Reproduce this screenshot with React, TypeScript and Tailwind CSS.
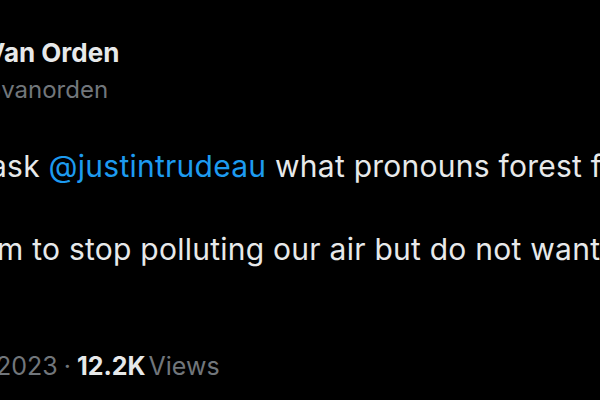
export default function App() {
  return (
    <div className="w-[600px] h-[400px] bg-black overflow-hidden font-['Inter',sans-serif] text-[#e7e9ea]">
      <div className="flex flex-col pt-[38px] whitespace-nowrap">
        {/* author */}
        <div className="-ml-[14px] text-[26px] leading-[30px] font-bold">Van Orden</div>
        <div className="mt-[7px] -ml-[22px] text-[24px] leading-[30px] text-[#71767b]">@vanorden</div>

        {/* tweet body */}
        <p className="mt-[43px] -ml-[10px] text-[30px] leading-[36px] tracking-[0.25px]">
          ask <span className="text-[#1d9bf0]">@justintrudeau</span> what pronouns forest fires use
        </p>
        <p className="mt-[47px] -ml-[3px] text-[30px] leading-[36px] tracking-[0.25px]">
          m to stop polluting our air but do not want to offend them
        </p>

        {/* meta */}
        <div className="mt-[84px] -ml-[4px] flex items-baseline text-[25px] leading-[30px] text-[#71767b]">
          <span>2023</span>
          <span className="mx-[6px]">·</span>
          <span className="font-bold text-[#e7e9ea]">12.2K</span>
          <span className="ml-[3px]">Views</span>
        </div>
      </div>
    </div>
  );
}
